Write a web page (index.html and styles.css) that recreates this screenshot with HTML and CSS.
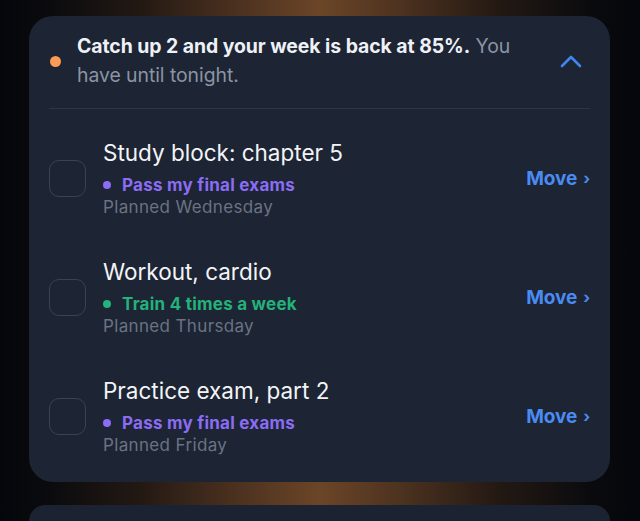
FILE: index.html
```html
<!DOCTYPE html>
<html lang="en">
<head>
<meta charset="utf-8">
<title>Catch up</title>
<link rel="stylesheet" href="styles.css">
</head>
<body>
<main class="stack">
  <section class="card">
    <header class="card-head">
      <span class="head-dot"></span>
      <p class="head-text"><strong>Catch up 2 and your week is back at 85%.</strong> You have until tonight.</p>
      <button class="collapse" aria-label="Collapse">
        <svg width="22" height="14" viewBox="0 0 22 14"><path d="M2 12 L11 3 L20 12" fill="none" stroke="currentColor" stroke-width="2.6" stroke-linecap="round" stroke-linejoin="round"/></svg>
      </button>
    </header>
    <ul class="tasks">
      <li class="task">
        <span class="check"></span>
        <div class="task-body">
          <div class="task-title">Study block: chapter 5</div>
          <div class="task-goal goal-purple"><span class="goal-dot"></span>Pass my final exams</div>
          <div class="task-plan">Planned Wednesday</div>
        </div>
        <a class="move" href="#">Move<span class="move-chev">›</span></a>
      </li>
      <li class="task">
        <span class="check"></span>
        <div class="task-body">
          <div class="task-title">Workout, cardio</div>
          <div class="task-goal goal-green"><span class="goal-dot"></span>Train 4 times a week</div>
          <div class="task-plan">Planned Thursday</div>
        </div>
        <a class="move" href="#">Move<span class="move-chev">›</span></a>
      </li>
      <li class="task">
        <span class="check"></span>
        <div class="task-body">
          <div class="task-title">Practice exam, part 2</div>
          <div class="task-goal goal-purple"><span class="goal-dot"></span>Pass my final exams</div>
          <div class="task-plan">Planned Friday</div>
        </div>
        <a class="move" href="#">Move<span class="move-chev">›</span></a>
      </li>
    </ul>
  </section>
  <section class="card card-next"></section>
</main>
</body>
</html>
```

FILE: styles.css
```css
* { box-sizing: border-box; }
html, body { height: 100%; }
body {
  margin: 0;
  overflow: hidden;
  font-family: "Inter", "Liberation Sans", sans-serif;
  background: linear-gradient(90deg, #04060b 0%, #0b0b0e 8%, #231913 22%, #4e3320 38%, #6b4527 50%, #4e3320 62%, #231913 78%, #0b0b0e 92%, #04060b 100%);
}
.stack {
  display: flex;
  flex-direction: column;
  gap: 23px;
  height: 100vh;
  overflow: hidden;
  padding: 16px 30px 0 29px;
}
.card {
  flex: none;
  background: #1d2433;
  border-radius: 24px;
  padding: 16px 20px 6px;
}
.card-next {
  flex: 1 0 0;
  min-height: 0;
  border-radius: 24px 24px 0 0;
  background: #1b2232;
  padding: 0;
}
.card-head {
  display: flex;
  align-items: center;
  padding-bottom: 18px;
  border-bottom: 1px solid #2e3646;
}
.head-dot {
  flex: none;
  width: 11px;
  height: 11px;
  border-radius: 50%;
  background: #fb9b55;
  margin: 0 16px 0 1px;
}
.head-text {
  margin: 0;
  flex: 1;
  max-width: 450px;
  font-size: 19.4px;
  line-height: 29px;
  color: #8a94a4;
  letter-spacing: -0.05px;
}
.head-text strong {
  color: #eef1f6;
  font-weight: 700;
}
.collapse {
  margin-left: auto;
  margin-right: 8px;
  background: none;
  border: 0;
  padding: 0;
  color: #3f86f0;
  display: flex;
}
.tasks {
  list-style: none;
  margin: 10px 0 0;
  padding: 0;
}
.task {
  display: flex;
  align-items: center;
  padding: 20px 0 21px;
}
.check {
  flex: none;
  width: 37px;
  height: 37px;
  border: 1.5px solid #3a4253;
  border-radius: 10px;
  margin-right: 17px;
}
.task-body {
  flex: 1;
}
.task-title {
  font-size: 22.5px;
  line-height: 28px;
  color: #f2f4f7;
  letter-spacing: 0;
}
.task-goal {
  display: flex;
  align-items: center;
  margin-top: 6px;
  font-size: 17px;
  line-height: 24px;
  font-weight: 700;
  letter-spacing: 0.25px;
}
.goal-dot {
  width: 8px;
  height: 8px;
  border-radius: 50%;
  margin: 0 11px 0 0;
  background: currentColor;
}
.goal-purple { color: #8b6cf4; }
.goal-green { color: #22b27a; }
.task-plan {
  font-size: 17px;
  line-height: 20px;
  color: #6a7384;
  letter-spacing: 0.35px;
}
.move {
  display: flex;
  align-items: center;
  color: #4a8bf2;
  text-decoration: none;
  font-size: 19px;
  font-weight: 700;
  letter-spacing: -0.1px;
}
.move-chev {
  font-size: 16px;
  margin-left: 6px;
  font-weight: 700;
}
```
